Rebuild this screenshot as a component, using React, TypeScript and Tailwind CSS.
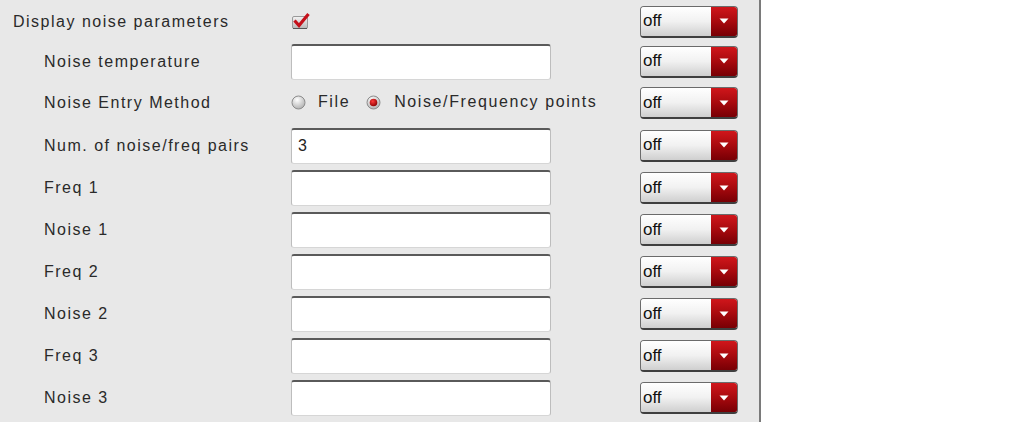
import React from 'react';

const rows: { label: string; kind: 'check' | 'input' | 'radio'; value?: string; h: string; indent?: boolean }[] = [
  { label: 'Display noise parameters', kind: 'check', h: 'h-[39px]' },
  { label: 'Noise temperature', kind: 'input', h: 'h-[41px]', indent: true },
  { label: 'Noise Entry Method', kind: 'radio', h: 'h-[42px]', indent: true },
  { label: 'Num. of noise/freq pairs', kind: 'input', value: '3', h: 'h-[43px]', indent: true },
  { label: 'Freq 1', kind: 'input', h: 'h-[42px]', indent: true },
  { label: 'Noise 1', kind: 'input', h: 'h-[42px]', indent: true },
  { label: 'Freq 2', kind: 'input', h: 'h-[42px]', indent: true },
  { label: 'Noise 2', kind: 'input', h: 'h-[42px]', indent: true },
  { label: 'Freq 3', kind: 'input', h: 'h-[42px]', indent: true },
  { label: 'Noise 3', kind: 'input', h: 'h-[42px]', indent: true },
];

function CheckBox() {
  return (
    <svg width="20" height="18" viewBox="0 0 20 18">
      <defs>
        <linearGradient id="cb" x1="0" y1="0" x2="0" y2="1">
          <stop offset="0" stopColor="#f4f4f4" />
          <stop offset="1" stopColor="#b8b8b8" />
        </linearGradient>
      </defs>
      <rect x="1.5" y="4.5" width="15" height="12" rx="1.5" fill="url(#cb)" stroke="#9a9a9a" />
      <line x1="2" y1="16.5" x2="16" y2="16.5" stroke="#555" />
      <path d="M3.5 8.5 L8 13.5 L17.5 2" fill="none" stroke="#c4101a" strokeWidth="3.2" strokeLinejoin="miter" />
    </svg>
  );
}

function Radio({ on }: { on?: boolean }) {
  return (
    <svg width="15" height="15" viewBox="0 0 15 15">
      <defs>
        <radialGradient id="rg" cx="0.4" cy="0.3" r="0.8">
          <stop offset="0" stopColor="#ffffff" />
          <stop offset="1" stopColor="#a8a8a8" />
        </radialGradient>
        <radialGradient id="rr" cx="0.4" cy="0.35" r="0.7">
          <stop offset="0" stopColor="#ff3b3b" />
          <stop offset="1" stopColor="#8a0000" />
        </radialGradient>
      </defs>
      <circle cx="7.5" cy="7.5" r="6.5" fill="url(#rg)" stroke="#8c8c8c" />
      {on && <circle cx="7.5" cy="7.5" r="3.8" fill="url(#rr)" />}
    </svg>
  );
}

function Dropdown() {
  return (
    <div className="flex w-[98px] h-[32px] rounded-[4px] border border-[#6b6b6b] border-b-2 border-b-[#3f3f3f] overflow-hidden">
      <div className="flex-1 flex items-center pl-[2px] bg-gradient-to-b from-[#ffffff] via-[#f1f1f1] to-[#cfcfcf] text-[17px] text-[#111]">
        off
      </div>
      <div className="w-[26px] flex items-center justify-center bg-gradient-to-b from-[#d0161b] via-[#a80a0e] to-[#780005]">
        <svg width="10" height="6" viewBox="0 0 10 6">
          <path d="M0.5 0.5 H9.5 L5 5.5 Z" fill="#ffffff" />
        </svg>
      </div>
    </div>
  );
}

function TextField({ value }: { value?: string }) {
  return (
    <div className="w-[260px] h-[36px] bg-white rounded-[3px] border-t-2 border-t-[#5a5a5a] border-x border-x-[#bdbdbd] border-b border-b-[#d6d6d6] flex items-center pl-[6px] text-[16px] text-[#222]">
      {value}
    </div>
  );
}

export default function App() {
  return (
    <div className="w-[1013px] h-[428px] bg-white" style={{ fontFamily: '"Liberation Sans", Arial, sans-serif' }}>
      <div className="w-[761px] bg-[#e8e8e8] border-r-2 border-r-[#7a7a7a] pt-[2px] pb-[3px]">
        {rows.map((r, i) => (
          <div key={i} className={`flex items-center ${r.h}`}>
            <div className={`w-[291px] text-[16px] tracking-[1.5px] text-[#2a2a2a] ${r.indent ? 'pl-[44px]' : 'pl-[13px]'}`}>
              {r.label}
            </div>
            <div className="w-[349px] flex items-center">
              {r.kind === 'check' && <div className="-mt-[2px]"><CheckBox /></div>}
              {r.kind === 'input' && <TextField value={r.value} />}
              {r.kind === 'radio' && (
                <div className="flex items-center text-[16px] tracking-[1.6px] text-[#2a2a2a] -mt-[2px]">
                  <Radio />
                  <span className="ml-[12px]">File</span>
                  <span className="ml-[16px]"><Radio on /></span>
                  <span className="ml-[13px]">Noise/Frequency points</span>
                </div>
              )}
            </div>
            <Dropdown />
          </div>
        ))}
      </div>
    </div>
  );
}
